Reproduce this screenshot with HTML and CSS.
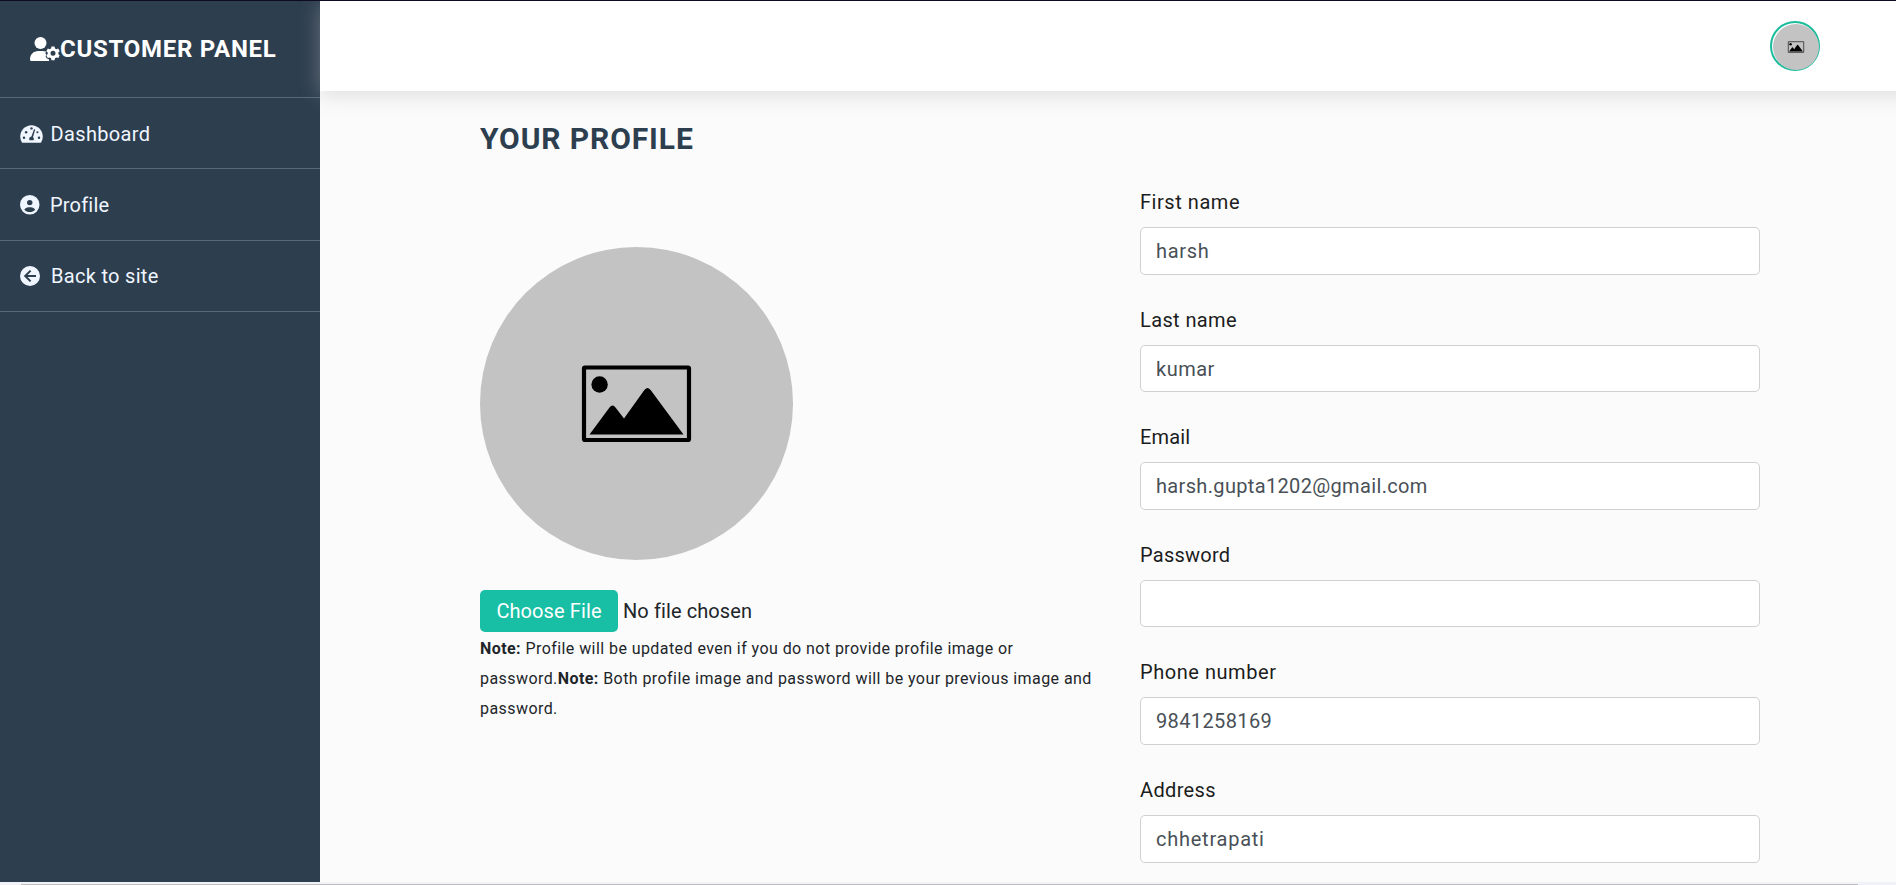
FILE: index.html
```html
<!DOCTYPE html>
<html lang="en">
<head>
<meta charset="utf-8">
<title>Customer Panel</title>
<link rel="stylesheet" href="styles.css">
</head>
<body>
<svg class="defs" aria-hidden="true">
  <symbol id="picture" viewBox="0 0 313 313">
    <rect width="313" height="313" fill="#c3c3c3"/>
    <rect x="104" y="120.500" width="105" height="72.500" rx="1" fill="none" stroke="#000" stroke-width="4.200"/>
    <circle cx="119.600" cy="137.500" r="8.200"/>
    <path d="M109.500 187.500L129.500 160.500Q132.500 156.500 135.500 160.500L144 171.500L164 143.500Q167.500 138.500 171 143.500L203.500 187.500Z"/>
  </symbol>
</svg>
<div class="layout">
  <aside class="sidebar">
    <div class="brand">
      <svg class="brand-icon" viewBox="0 0 30 24" fill="currentColor">
        <circle cx="10.500" cy="6" r="6"/>
        <path d="M0 22.500C0 17.500 3.500 14 8.200 14H12.800C14 14 15 14.200 16 14.600C15.200 16 15.400 17 16.300 17.800C15.300 19 15.500 20.500 17 21.500L18.800 22.200L19.200 24H1.500Q0 24 0 22.500Z"/>
        <path fill-rule="evenodd" d="M21.500 9.600h3l.5 1.900 1.300.7 1.900-.6 1.500 2.600-1.400 1.300v1.600l1.400 1.300-1.500 2.600-1.900-.6-1.300.8-.5 2h-3l-.5-2-1.300-.8-1.900.6-1.500-2.600 1.400-1.300v-1.600l-1.400-1.300 1.500-2.600 1.900.6 1.300-.7zM23 13.800a2.500 2.500 0 1 0 0 5a2.500 2.500 0 1 0 0-5z"/>
      </svg>
      <span>CUSTOMER PANEL</span>
    </div>
    <nav>
      <a class="nav-item">
        <svg class="icon-gauge" viewBox="0 0 576 512">
          <path fill="currentColor" d="M288 32C129 32 0 161 0 320c0 53 14 102 39 145 6 9 16 15 27 15h443c12 0 22-6 28-15 25-43 39-92 39-145 0-159-129-288-288-288z"/>
          <g fill="#2d3e4f"><circle cx="288" cy="112" r="31"/><circle cx="96" cy="352" r="31"/><circle cx="150" cy="210" r="31"/><circle cx="480" cy="352" r="31"/><circle cx="440" cy="210" r="27"/>
          <path d="M352 134L383 143L326 336C353 358 358 388 338 416H238C213 374 237 325 286 320Z"/></g>
        </svg>
        <span class="t-dash">Dashboard</span>
      </a>
      <a class="nav-item">
        <svg class="icon-user" viewBox="0 0 512 512" fill="currentColor"><path fill-rule="evenodd" d="M399 384.200C376.900 345.800 335.400 320 288 320H224c-47.400 0-88.900 25.800-111 64.200c35.200 39.200 86.200 63.800 143 63.800s107.800-24.700 143-63.800zM0 256a256 256 0 1 1 512 0A256 256 0 1 1 0 256zm256 16a72 72 0 1 0 0-144 72 72 0 1 0 0 144z"/></svg>
        <span class="t-profile">Profile</span>
      </a>
      <a class="nav-item">
        <svg class="icon-back" viewBox="0 0 20 20"><circle cx="10" cy="10" r="10" fill="currentColor"/><path d="M10.600 4.600L5.200 10L10.600 15.400M5.500 10H16" fill="none" stroke="#2d3e4f" stroke-width="2"/></svg>
        <span class="t-back">Back to site</span>
      </a>
    </nav>
  </aside>
  <div class="page">
    <header class="topbar">
      <div class="avatar"><svg><use href="#picture"/></svg></div>
    </header>
    <main class="content">
      <h1>YOUR PROFILE</h1>
      <div class="columns">
        <section class="photo">
          <svg class="photo-img"><use href="#picture"/></svg>
          <div class="file"><span class="file-btn">Choose File</span><span class="file-name">No file chosen</span></div>
          <p class="note"><b>Note:</b> Profile will be updated even if you do not provide profile image or<br>password.<b>Note:</b> Both profile image and password will be your previous image and<br>password.</p>
        </section>
        <form class="form">
          <div class="field"><label class="t-first">First name</label><div class="input t-harsh">harsh</div></div>
          <div class="field"><label class="t-last">Last name</label><div class="input t-kumar">kumar</div></div>
          <div class="field"><label class="t-email">Email</label><div class="input t-mail">harsh.gupta1202@gmail.com</div></div>
          <div class="field"><label class="t-pass">Password</label><div class="input"></div></div>
          <div class="field"><label class="t-phone">Phone number</label><div class="input t-num">9841258169</div></div>
          <div class="field"><label class="t-addr">Address</label><div class="input t-chh">chhetrapati</div></div>
        </form>
      </div>
    </main>
  </div>
</div>
<div class="scroll-edge"><div class="scroll-line"></div></div>
</body>
</html>
```
FILE: styles.css
```css
* { box-sizing: border-box; }
html, body { margin: 0; height: 885px; overflow: hidden; }
body {
  font: 20px/30px Roboto, sans-serif;
  color: #212529;
  background: #fbfbfb;
  border-top: 1px solid #0d0a22;
  display: flex;
  flex-direction: column;
}
.defs { position: absolute; width: 0; height: 0; }
.layout { display: flex; height: 881px; overflow: hidden; }

/* Sidebar */
.sidebar { width: 320px; flex: none; background: #2d3e4f; color: #f0f6ff; }
.brand {
  height: 97px;
  padding: 0 0 1px 30px;
  display: flex;
  align-items: center;
  border-bottom: 1px solid #566879;
  color: #fff;
  font-size: 24px;
  font-weight: 700;
  letter-spacing: .73px;
}
.brand-icon { width: 30px; height: 24px; }
.nav-item {
  height: 71.400px;
  padding: 1px 0 0 20px;
  display: flex;
  align-items: center;
  border-bottom: 1px solid #566879;
}
.icon-gauge { width: 23px; height: 20px; margin-right: 7.500px; }
.icon-user { width: 19.500px; height: 19.500px; margin-right: 10.500px; }
.icon-back { width: 20px; height: 20px; margin-right: 11px; }

/* Header */
.page { flex: 1; display: flex; flex-direction: column; }
.topbar {
  position: relative;
  height: 90px;
  flex: none;
  margin-right: -40px;
  padding-right: 116px;
  display: flex;
  align-items: center;
  justify-content: flex-end;
  background: #fff;
  box-shadow: 0 3px 20px rgba(180, 180, 180, .45);
}
.avatar {
  width: 50px;
  height: 50px;
  padding: 1px;
  border: 2px solid #1abc9c;
  border-radius: 50%;
}
.avatar svg { display: block; width: 46px; height: 46px; margin: 0; border-radius: 50%; }

/* Profile */
.content { padding: 30px 136px 0 160px; }
h1 {
  margin: 0;
  color: #2d3e4f;
  font-size: 30px;
  line-height: 36px;
  font-weight: 700;
  letter-spacing: .9px;
}
.columns { display: grid; grid-template-columns: 620px 620px; gap: 40px; margin-top: 30px; }
.photo { padding-top: 60px; }
.photo-img { display: block; width: 313px; height: 313px; border-radius: 50%; }
.file { display: flex; align-items: center; gap: 5px; margin-top: 30px; }
.file-btn {
  width: 138px;
  height: 42px;
  line-height: 42px;
  text-align: center;
  color: #fff;
  background: #18bfa5;
  border-radius: 5px;
  letter-spacing: .1px;
}
.file-name { letter-spacing: .1px; }
.note { margin: 2px 0 0; font-size: 16px; letter-spacing: .43px; white-space: nowrap; }
.form { display: grid; row-gap: 30px; }
.field { display: grid; row-gap: 10px; }
.input {
  height: 47.600px;
  padding: 0 15px;
  line-height: 46px;
  color: #495057;
  background: #fff;
  border: 1px solid #ced0d3;
  border-radius: 5px;
}
label { color: #1b1d20; }

/* Tracking */
.t-dash { letter-spacing: .35px; }
.t-profile { letter-spacing: .2px; }
.t-back { letter-spacing: .3px; }
.t-first { letter-spacing: .55px; }
.t-last { letter-spacing: .38px; }
.t-email { letter-spacing: .15px; }
.t-pass { letter-spacing: .25px; }
.t-phone { letter-spacing: .55px; }
.t-addr { letter-spacing: .35px; }
.t-harsh { letter-spacing: .7px; }
.t-kumar { letter-spacing: .5px; }
.t-mail { letter-spacing: .34px; }
.t-num { letter-spacing: .38px; }
.t-chh { letter-spacing: .75px; }

.scroll-edge { height: 3px; background: #f1f2f7; padding: 2px 38px 0 21px; }
.scroll-line { height: 1px; background: #bdbdbd; }
```
